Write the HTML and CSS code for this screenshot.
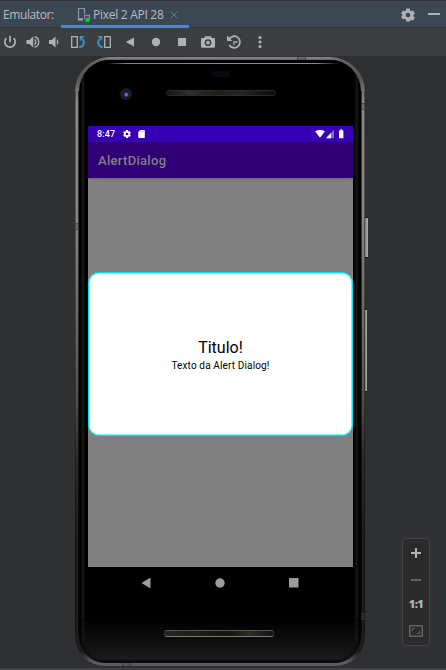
FILE: index.html
```html
<!DOCTYPE html>
<html lang="pt">
<head>
<meta charset="utf-8">
<title>Emulator</title>
<link rel="stylesheet" href="styles.css">
</head>
<body>
<div class="window">
  <header class="tabs">
    <span class="tabs-label">Emulator:</span>
    <div class="tab">
      <svg class="tab-icon" width="14" height="16" viewBox="0 0 14 16"><path d="M6 12.2H1.500V1.500H7.500V7" fill="none" stroke="#8896a1" stroke-width="1.200"/><path d="M1 12.500h5" stroke="#a0aab2" stroke-width="2"/><path d="M7.500 12V8.500h5V12" fill="none" stroke="#9b72b5" stroke-width="1.300"/><circle cx="10.500" cy="13" r="2.300" fill="#00dc18"/></svg>
      <span class="tab-name">Pixel 2 API 28</span>
      <svg class="tab-close" width="8" height="8" viewBox="0 0 8 8"><path d="M.5.5l7 7M7.500.5l-7 7" stroke="#6d7780"/></svg>
    </div>
    <svg class="gear" width="14" height="14" viewBox="0 0 24 24" fill="#afb1b3"><path fill-rule="evenodd" d="M9 1h6l.6 3.400 2 1.200 3.200-1.200 3 5.200-2.700 2.200v2.400l2.700 2.200-3 5.200-3.200-1.200-2 1.200L15 23H9l-.6-3.400-2-1.200-3.200 1.200-3-5.200 2.700-2.200V11.800L.2 9.600l3-5.200 3.200 1.200 2-1.200zM12 8a4 4 0 100 8 4 4 0 000-8z"/></svg>
    <span class="minimize"></span>
  </header>

  <nav class="toolbar">
    <svg width="14" height="14" viewBox="0 0 14 14"><path d="M3.300 3.200a5.200 5.200 0 107.400 0M7 .8v6.400" fill="none" stroke="#afb1b3" stroke-width="1.700"/></svg>
    <svg width="14" height="14" viewBox="0 0 14 14"><path d="M.5 5h3L7.200 1.500v11L3.500 9h-3z" fill="#afb1b3"/><path d="M8.500 4.500c1.800 1.300 1.800 3.700 0 5M8.500 1.800c5.600 1.300 5.600 9.100 0 10.400" fill="none" stroke="#afb1b3" stroke-width="1.400"/></svg>
    <svg width="12" height="14" viewBox="0 0 12 14"><path d="M1 5h2.700L7.500 1.500v11L3.700 9H1z" fill="#afb1b3"/><path d="M8.800 4.200c2.200 1.300 2.200 4.300 0 5.600z" fill="#afb1b3"/></svg>
    <svg width="16" height="14" viewBox="0 0 16 14"><path d="M1.700 1.700h5.600v10.600H1.700z" fill="none" stroke="#afb1b3" stroke-width="1.300"/><path d="M9.200 12.300c5-.8 5.300-5 3.700-8" fill="none" stroke="#3592c4" stroke-width="2"/><path d="M9.500 1h5.200L10 6.300z" fill="#3592c4"/></svg>
    <svg width="16" height="14" viewBox="0 0 16 14"><path d="M8.700 1.700h5.600v10.600H8.700z" fill="none" stroke="#afb1b3" stroke-width="1.300"/><path d="M6.800 12.300c-5-.8-5.300-5-3.700-8" fill="none" stroke="#3592c4" stroke-width="2"/><path d="M6.500 1H1.300L6 6.300z" fill="#3592c4"/></svg>
    <svg width="10" height="10" viewBox="0 0 10 10"><path d="M9 .5v9L.8 5z" fill="#afb1b3"/></svg>
    <svg width="10" height="10" viewBox="0 0 10 10"><circle cx="5" cy="5" r="4.200" fill="#afb1b3"/></svg>
    <svg width="8" height="8" viewBox="0 0 8 8"><path d="M0 0h8v8H0z" fill="#afb1b3"/></svg>
    <svg width="14" height="14" viewBox="0 0 14 14"><path fill-rule="evenodd" d="M4.300 1.300h5.400L11 3h2q1 0 1 1v7.800q0 1-1 1H1q-1 0-1-1V4q0-1 1-1h2zM7 4.300a3.400 3.400 0 100 6.800 3.400 3.400 0 000-6.800z" fill="#afb1b3"/><circle cx="7" cy="7.700" r="1.900" fill="#afb1b3"/></svg>
    <svg width="16" height="16" viewBox="0 0 16 16"><path d="M3 5.300A5.800 5.800 0 113.200 11" fill="none" stroke="#afb1b3" stroke-width="1.700"/><path d="M1 1.500v5.500h5.500z" fill="#afb1b3"/><path d="M8 11V8h3.500" fill="none" stroke="#afb1b3" stroke-width="1.300"/></svg>
    <svg width="4" height="14" viewBox="0 0 4 14" fill="#afb1b3"><circle cx="2" cy="2.500" r="1.600"/><circle cx="2" cy="7" r="1.600"/><circle cx="2" cy="11.500" r="1.600"/></svg>
  </nav>

  <main class="canvas">
    <div class="phone">
      <i class="side-key power"></i><i class="side-key volume"></i>
      <i class="seam seam-left"></i><i class="seam seam-right"></i><i class="seam seam-low"></i><i class="seam seam-top"></i><i class="seam seam-bottom"></i>
      <div class="body">
        <div class="forehead">
          <i class="glint"></i>
          <i class="sensor"></i>
          <i class="camera"></i>
          <i class="speaker"></i>
        </div>
        <div class="screen">
          <div class="status">
            <span class="time">8:47</span>
            <svg class="status-gear" width="8" height="8" viewBox="0 0 24 24" fill="#fff"><path fill-rule="evenodd" d="M9 0h6l.6 3.400 2 1.200 3.200-1.200 3 5.200-2.700 2.200v2.400l2.700 2.200-3 5.200-3.200-1.200-2 1.200L15 24H9l-.6-3.400-2-1.200-3.200 1.200-3-5.200 2.700-2.200V10.800L.2 8.600l3-5.200 3.200 1.200 2-1.200zM12 8a4 4 0 100 8 4 4 0 000-8z"/></svg>
            <svg class="status-card" width="7" height="8" viewBox="0 0 7 8"><path d="M2.300 0H6q.8 0 .8.800v6.400q0 .8-.8.800H1q-.8 0-.8-.8V2.200z" fill="#fff"/><path d="M2.700 1v1.300M4 1v1.300M5.300 1v1.300" stroke="#3700b3" stroke-width=".3"/></svg>
            <svg class="status-signals" width="29" height="10" viewBox="0 0 29 10"><path d="M0 2.300q5-3.300 10 0L5 8.700z" fill="#fff"/><path d="M19 .8v8.400h-8z" fill="#8966d1"/><path d="M16 4v5.200h-5z" fill="#fff"/><path d="M24 1.400h1.200V.4h2v1h1.200v7.800H24z" fill="#fff"/></svg>
          </div>
          <div class="appbar">AlertDialog</div>
          <div class="scrim">
            <section class="dialog">
              <h1>Titulo!</h1>
              <p>Texto da Alert Dialog!</p>
            </section>
          </div>
        </div>
        <div class="navkeys">
          <svg width="10" height="12" viewBox="0 0 10 12"><path d="M9.500.5v11L.5 6z" fill="#9c9c9c"/></svg>
          <svg width="10" height="10" viewBox="0 0 10 10"><circle cx="5" cy="5" r="4.700" fill="#9c9c9c"/></svg>
          <svg width="10" height="10" viewBox="0 0 10 10"><path d="M0 0h9.500v9.500H0z" fill="#9c9c9c"/></svg>
        </div>
        <i class="speaker speaker-low"></i>
      </div>
    </div>
    <aside class="zoom">
      <svg width="10" height="10" viewBox="0 0 10 10"><path d="M5 0v10M0 5h10" stroke="#afb1b3" stroke-width="2"/></svg>
      <svg width="10" height="2" viewBox="0 0 10 2"><path d="M0 1h10" stroke="#616263" stroke-width="2"/></svg>
      <span class="ratio">1:1</span>
      <svg width="14" height="12" viewBox="0 0 14 12"><path d="M.75.75h12.500v10.500H.75z" fill="none" stroke="#616263" stroke-width="1.500"/><path d="M3.500 6V3.500H6M8 8.500h2.500V6" fill="none" stroke="#616263"/></svg>
    </aside>
  </main>
  <footer class="edge"></footer>
</div>
</body>
</html>
```
FILE: styles.css
```css
* { box-sizing: border-box; }
body { margin: 0; background: #2f3032; font-family: Roboto, sans-serif; }
svg, i { display: block; flex: none; }
.window { width: 446px; height: 670px; display: flex; flex-direction: column; overflow: hidden; }

.tabs {
  height: 28px; display: flex; align-items: center; padding-right: 6px;
  background: #3c4754; border-top: 1px solid #303234; border-bottom: 1px solid #303335;
  font: 12px "Open Sans", sans-serif; color: #bbb;
}
.tabs-label { width: 61px; padding: 1px 0 0 3px; letter-spacing: -.4px; white-space: nowrap; }
.tab { width: 128px; height: 26px; display: flex; align-items: center; padding: 3px 0 0 16px; border-bottom: 3px solid #4a88c7; margin-bottom: -1px; }
.tab-icon { margin-top: 1px; }
.tab-name { width: 77px; margin-left: 2px; letter-spacing: -.28px; white-space: nowrap; }
.tab-close { margin-top: 1px; }
.gear { margin: 1px 0 0 212px; }
.minimize { width: 12px; height: 2px; margin-left: 13px; background: #afb1b3; }

.toolbar {
  height: 28px; display: grid; align-items: center; justify-items: center;
  grid-template-columns: 20px 25px 18px 30px 22px 30px 22px 30px 22px 30px 22px;
  background: #3c3f41;
}

.canvas { height: 612px; display: flex; align-items: flex-start; padding: 1px 0 0 75px; background: #2f3032; }
.edge { height: 2px; background: #414246; }

.phone {
  position: relative; width: 290px; height: 609px; padding: 3px 4px; border-radius: 35px 35px 30px 30px;
  background:
    linear-gradient(90deg, #0005 0 1px, transparent 1px 3px, #0009 3px 287px, transparent 287px 289px, #0006 289px) 0 34px / 100% 542px no-repeat,
    linear-gradient(#8d898c 0, #666 3px, #555 20px, #898989 45px, #858585 160px, #656565 270px, #505050 340px, #2c2c2c 400px, #1c1c1c 480px, #1c1c1c 595px, #606060 606px, #555);
}
.body {
  height: 603px; border-radius: 31px 31px 27px 27px; padding: 0 9px;
  background: linear-gradient(90deg, #030303, #000 2px, #171717 3px, #131313 5px, #000 6px, #000 275px, #0a0a0a 276px, #171717 278px, #000 280px);
  position: relative; overflow: hidden;
}
.body::after {
  content: ""; position: absolute; left: 0; right: 0; bottom: 0; height: 44px;
  background: linear-gradient(transparent, #1b1b1b 90%, #080808);
  border-radius: 0 0 27px 27px;
  box-shadow: inset 5px 0 5px -3px #000, inset -5px 0 5px -3px #000;
}
.forehead { position: relative; height: 66px; background: #000; }
.glint { position: absolute; left: 19px; right: 12px; top: 3px; height: 1px; background: linear-gradient(90deg, transparent, #7d8587 8%, #858d8f 90%, transparent); }
.sensor { position: absolute; left: 123px; top: 11px; width: 19px; height: 6px; border-radius: 3px; background: #090a10; }
.camera { position: absolute; left: 32px; top: 28px; width: 12px; height: 12px; border-radius: 50%; background: radial-gradient(circle at 52% 55%, #6478bd 0 1px, #24367a 2px, #0c1230 3px, #1e2023 4px, #171719 6px); }
.speaker { position: absolute; left: 78px; top: 30px; width: 110px; height: 6px; border-radius: 3px; background: linear-gradient(90deg, #15120d, #33302a 20%, #1e1c18 45%, #28241f 70%, #0c0b0a); border: 1px solid #2b2b2b; }
.speaker-low { left: 85px; top: 570px; height: 7px; z-index: 1; background: linear-gradient(90deg, #26271f, #15150f 60%, #302e25 78%, #15140f); border-color: #53534f #333 #777; }

.screen { width: 265px; height: 441px; display: flex; flex-direction: column; background: #808080; }
.status { height: 16px; display: flex; align-items: center; padding-left: 9px; background: #3700b3; color: #fff; font-size: 9px; font-weight: 500; }
.time { width: 26px; letter-spacing: .1px; }
.status-card { margin-left: 7px; }
.status-signals { margin-left: 170px; }
.appbar { height: 36px; padding: 0 0 0 10px; display: flex; align-items: center; background: #310076; color: #808080; font-size: 13px; font-weight: 500; letter-spacing: .3px; box-shadow: 0 1px 2px #666; clip-path: inset(0 0 -3px); z-index: 1; }
.scrim { flex: 1; padding-top: 94px; }
.dialog { height: 164px; border: 1px solid #00e1fb; box-shadow: inset 0 0 0 .5px #00e1fb; border-radius: 11px; background: #fff; color: #000; display: flex; flex-direction: column; align-items: center; padding-top: 65px; }
h1 { margin: 0; font-size: 16px; line-height: 19px; font-weight: 400; }
p { margin: 2px 0 0; font-size: 10px; line-height: 13px; letter-spacing: .14px; }
.navkeys { height: 31px; display: flex; align-items: center; justify-content: space-between; padding: 0 53px 0 53px; }

.side-key { position: absolute; background: linear-gradient(90deg, #777, #b1b1b1); border-top: 1px solid #181818; border-bottom: 1px solid #181818; }
.power { left: 290px; top: 160px; width: 3px; height: 41px; }
.volume { left: 290px; top: 252px; width: 2px; height: 83px; }
.seam { position: absolute; background: #44444466; border: solid #3338; border-width: 1px 0; }
.seam-left { left: 0; top: 166px; width: 5px; height: 7px; }
.seam-right { right: 0; top: 46px; width: 4px; height: 7px; }
.seam-low { right: 0; top: 556px; width: 4px; height: 7px; }
.seam-top { left: 222px; top: 0; width: 9px; height: 3px; border-width: 0 1px; }
.seam-bottom { left: 47px; bottom: 0; width: 9px; height: 3px; border-width: 0 1px; }

.zoom {
  width: 28px; height: 108px; margin: 481px 0 0 37px; border: 1px solid #424344; border-radius: 4px; background: #2b2b2b;
  display: grid; grid-template-rows: 28px 25px 26px 26px; justify-items: center; align-items: center;
}
.ratio { font: 800 11px/14px "Open Sans", sans-serif; color: #afb1b3; letter-spacing: -.6px; margin-top: -2px; }
```
